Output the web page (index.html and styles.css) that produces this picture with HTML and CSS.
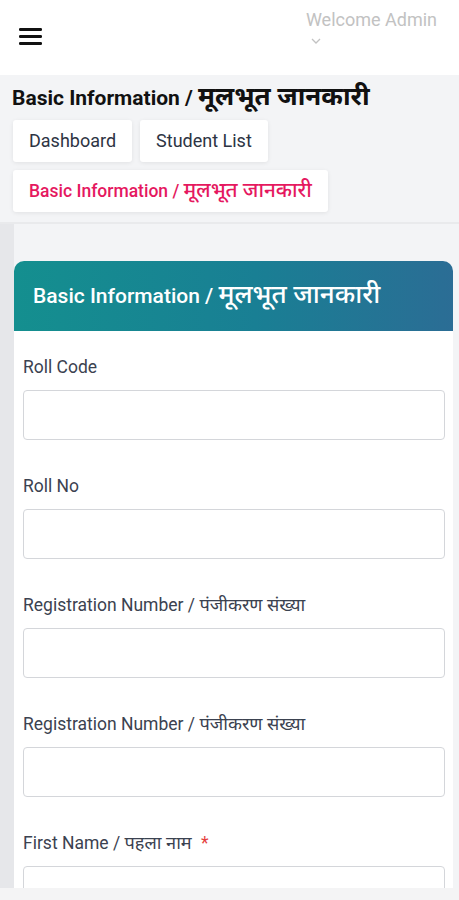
FILE: index.html
```html
<!DOCTYPE html>
<html>
<head>
  <title>Basic Information</title>
  <meta name="viewport" content="width=device-width, initial-scale=1">
  <link rel="stylesheet" href="styles.css">
</head>
<body>
<header class="topbar">
  <button class="menu-btn" aria-label="Menu">
    <svg width="24" height="18" viewBox="0 0 24 18">
      <rect x="0" y="0" width="23" height="3" rx="1.2" fill="#111"/>
      <rect x="0" y="7" width="23" height="3" rx="1.2" fill="#111"/>
      <rect x="0" y="14" width="23" height="3" rx="1.2" fill="#111"/>
    </svg>
  </button>
  <div class="user">
    <span class="user-name">Welcome Admin</span>
    <svg class="chevron" width="10" height="6" viewBox="0 0 10 6">
      <path d="M1 1 L5 5 L9 1" fill="none" stroke="#c2c2c2" stroke-width="1.3"/>
    </svg>
  </div>
</header>

<div class="page-head">
  <h1>Basic Information / <span class="hi">मूलभूत जानकारी</span></h1>
  <div class="crumbs">
    <a class="crumb">Dashboard</a>
    <a class="crumb">Student List</a>
    <a class="crumb active">Basic Information / <span class="hi">मूलभूत जानकारी</span></a>
  </div>
</div>

<div class="content">
  <div class="card">
    <div class="card-header">Basic Information / <span class="hi">मूलभूत जानकारी</span></div>
    <div class="card-body">
      <div class="field">
        <label for="roll-code">Roll Code</label>
        <input id="roll-code" />
      </div>
      <div class="field">
        <label for="roll-no">Roll No</label>
        <input id="roll-no" />
      </div>
      <div class="field">
        <label for="reg-no">Registration Number / <span class="hi">पंजीकरण संख्या</span></label>
        <input id="reg-no" />
      </div>
      <div class="field">
        <label for="reg-no-2">Registration Number / <span class="hi">पंजीकरण संख्या</span></label>
        <input id="reg-no-2" />
      </div>
      <div class="field">
        <label for="first-name">First Name / <span class="hi">पहला नाम</span> <span class="req">*</span></label>
        <input id="first-name" />
      </div>
    </div>
  </div>
</div>

<div class="bottom-bar"></div>
</body>
</html>
```

FILE: styles.css
```css
body {
  margin: 0;
  background-color: #f3f4f6;
  font-family: Roboto, "Noto Sans", "Noto Sans Devanagari", sans-serif;
  color: #111;
}

/* devanagari glyphs come out small next to Roboto */
.hi {
  font-size: 1.24em;
  line-height: 1;
}

.topbar {
  height: 75px;
  background-color: #fff;
  display: flex;
  justify-content: space-between;
  align-items: flex-start;
}

.menu-btn {
  margin: 28px 0 0 19px;
  padding: 0;
  border: none;
  background: none;
}

.user {
  margin: 9px 22px 0 0;
  display: flex;
  flex-direction: column;
  align-items: flex-start;
}

.user-name {
  font-size: 18px;
  color: #c2c2c2;
  line-height: 22px;
}

.chevron {
  margin: 7px 0 0 5px;
}

.page-head {
  padding: 8px 0 10px 12px;
  border-bottom: 2px solid #e9eaec;
}

.page-head h1 {
  margin: 0 0 9px;
  font-size: 21px;
  font-weight: 700;
  line-height: 26px;
  color: #111;
}

.crumbs {
  display: flex;
  flex-wrap: wrap;
  gap: 8px;
  padding-left: 1px;
  margin-right: 100px;
}

.crumb {
  display: block;
  height: 42px;
  line-height: 42px;
  padding: 0 16px 0 16px;
  background-color: #fff;
  border-radius: 3px;
  box-shadow: 0 1px 4px rgba(0, 0, 0, 0.08);
  font-size: 18px;
  color: #2d3443;
}

.crumb.active {
  font-size: 17.5px;
  color: #e5185f;
  font-weight: 500;
}

.crumb.active .hi {
  font-size: 1.18em;
}

.content {
  padding: 37px 6px 0 0;
  background: linear-gradient(to right, #e6e7ea 0, #e6e7ea 14px, #f3f4f6 14px);
}

.card {
  margin-left: 14px;
  background-color: #fff;
  border-radius: 10px 10px 0 0;
}

.card-header {
  height: 70px;
  line-height: 70px;
  padding-left: 19px;
  border-radius: 10px 10px 0 0;
  background: linear-gradient(90deg, #148f8f 0%, #197f94 55%, #2b6d95 100%);
  color: #fff;
  font-size: 21px;
  font-weight: 500;
}

.card-header .hi {
  font-size: 1.24em;
}

.card-body {
  padding: 24px 8px 20px 9px;
}

.field {
  margin-bottom: 34px;
}

.field label {
  display: block;
  font-size: 17.5px;
  line-height: 24px;
  color: #3b4250;
  margin-bottom: 11px;
}

.field .hi {
  font-size: 1.04em;
}

.field input {
  display: block;
  box-sizing: border-box;
  width: 100%;
  height: 50px;
  border: 1px solid #d4d6da;
  border-radius: 4px;
  background-color: #fff;
}

.req {
  color: #e53e3e;
  margin-left: 5px;
}

.bottom-bar {
  position: fixed;
  left: 0;
  right: 0;
  bottom: 0;
  height: 12px;
  background-color: #f4f4f5;
}
```
